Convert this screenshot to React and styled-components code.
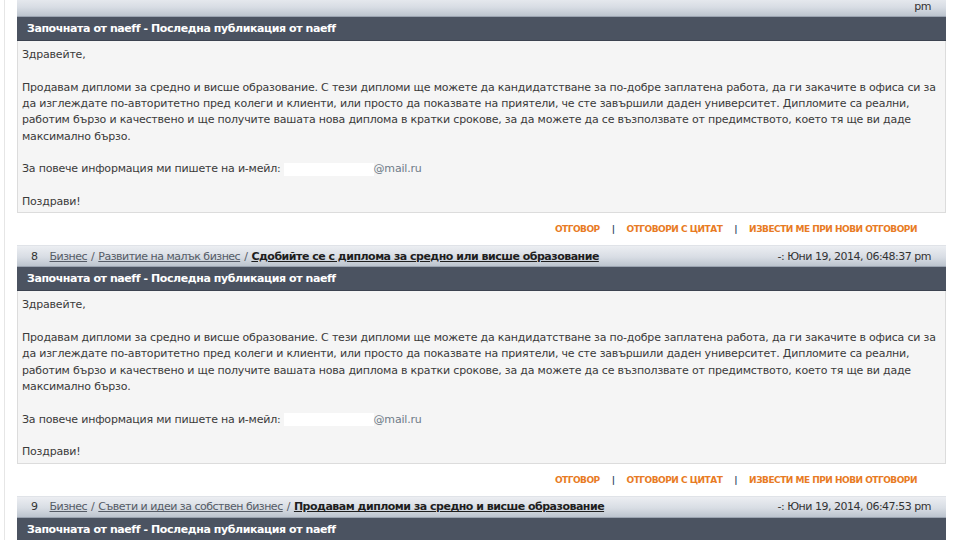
import React from "react";
import styled, { createGlobalStyle } from "styled-components";

const Global = createGlobalStyle`
  html, body { margin: 0; padding: 0; background: #ffffff; overflow: hidden; }
  body { font-family: "DejaVu Sans", Verdana, sans-serif; }
`;

const Page = styled.div`
  width: 956px;
  height: 540px;
  overflow: hidden;
  position: relative;
  background: #ffffff;
  border-left: 1px solid #e6e6e6;
  margin-left: 4px;
  box-sizing: border-box;
`;

const List = styled.div`
  display: flex;
  flex-direction: column;
  margin-top: -5px;
  margin-left: 12px;
  width: 929px;
`;

const Post = styled.div`
  display: flex;
  flex-direction: column;
`;

const TitleBar = styled.div`
  height: 22px;
  box-sizing: border-box;
  display: flex;
  align-items: center;
  justify-content: space-between;
  padding: 0 15px 0 14px;
  background: linear-gradient(#eceef2 0%, #d8dde4 55%, #bcc4ce 100%);
  border-top: 1px solid #e0e3e8;
  border-bottom: 1px solid #9aa3b0;
  font-family: "DejaVu Sans", Verdana, sans-serif;
  font-size: 11px;
  letter-spacing: -0.5px;
  color: #333;
`;

const Crumbs = styled.div`
  display: flex;
  align-items: center;
  white-space: nowrap;
`;

const Num = styled.span`
  margin-right: 12px;
  color: #333;
`;

const Crumb = styled.a`
  color: ${(p) => (p.$strong ? "#1e1e1e" : "#555b66")};
  font-weight: ${(p) => (p.$strong ? "bold" : "normal")};
  text-decoration: underline;
`;

const Slash = styled.span`
  color: #555b66;
  margin: 0 4px;
`;

const DateText = styled.span`
  white-space: nowrap;
  color: #333;
`;

const DarkBar = styled.div`
  height: 24px;
  box-sizing: border-box;
  display: flex;
  align-items: center;
  padding-left: 10px;
  background: #4b5361;
  border-bottom: 1px solid #3c4350;
  color: #ffffff;
  font-family: "DejaVu Sans", Verdana, sans-serif;
  font-weight: bold;
  font-size: 11px;
  letter-spacing: -0.42px;
  white-space: nowrap;
`;

const Body = styled.div`
  background: #f5f5f5;
  border: 1px solid #dcdcdc;
  border-top: none;
  padding: 6px 4px 2px 4px;
  font-family: "DejaVu Sans", Verdana, sans-serif;
  font-size: 11px;
  letter-spacing: -0.2px;
  line-height: 16.33px;
  color: #3a3a3a;
`;

const Para = styled.p`
  margin: 0 0 16.33px 0;
  white-space: nowrap;
  &:last-child { margin-bottom: 0; }
`;

const Redacted = styled.span`
  display: inline-block;
  width: 90px;
  height: 13px;
  background: #ffffff;
  vertical-align: middle;
  margin-left: 3px;
`;

const Mail = styled.span`
  color: #6f7b88;
`;

const Actions = styled.div`
  height: 32px;
  display: flex;
  align-items: center;
  justify-content: flex-end;
  padding-right: 29px;
  font-family: "DejaVu Sans", Verdana, sans-serif;
  font-size: 9px;
  font-weight: bold;
  letter-spacing: -0.5px;
  text-transform: uppercase;
`;

const ActionLink = styled.a`
  color: #e87b24;
  text-decoration: none;
  white-space: nowrap;
`;

const Sep = styled.span`
  color: #2f3f60;
  margin: 0 12px;
  font-weight: bold;
`;

const posts = [
  {
    num: "7",
    crumbs: ["Бизнес", "Развитие на малък бизнес"],
    subject: "Сдобийте се с диплома за средно или висше образование",
    date: "-: Юни 19, 2014, 06:49:12 pm",
  },
  {
    num: "8",
    crumbs: ["Бизнес", "Развитие на малък бизнес"],
    subject: "Сдобийте се с диплома за средно или висше образование",
    date: "-: Юни 19, 2014, 06:48:37 pm",
  },
  {
    num: "9",
    crumbs: ["Бизнес", "Съвети и идеи за собствен бизнес"],
    subject: "Продавам дипломи за средно и висше образование",
    date: "-: Юни 19, 2014, 06:47:53 pm",
  },
];

function PostView({ p, first }) {
  return (
    <Post>
      <TitleBar>
        <Crumbs>
          {!first && (
            <>
              <Num>{p.num}</Num>
              {p.crumbs.map((c) => (
                <React.Fragment key={c}>
                  <Crumb href="#">{c}</Crumb>
                  <Slash>/</Slash>
                </React.Fragment>
              ))}
              <Crumb href="#" $strong>
                {p.subject}
              </Crumb>
            </>
          )}
        </Crumbs>
        <DateText>{first ? "pm" : p.date}</DateText>
      </TitleBar>
      <DarkBar>Започната от naeff - Последна публикация от naeff</DarkBar>
      <Body>
        <Para>Здравейте,</Para>
        <Para>
          Продавам дипломи за средно и висше образование. С тези дипломи ще можете да кандидатстване за по-добре заплатена работа, да ги закачите в офиса си за
          <br />
          да изглеждате по-авторитетно пред колеги и клиенти, или просто да показвате на приятели, че сте завършили даден университет. Дипломите са реални,
          <br />
          работим бързо и качествено и ще получите вашата нова диплома в кратки срокове, за да можете да се възползвате от предимството, което тя ще ви даде
          <br />
          максимално бързо.
        </Para>
        <Para>
          За повече информация ми пишете на и-мейл:
          <Redacted />
          <Mail>@mail.ru</Mail>
        </Para>
        <Para>Поздрави!</Para>
      </Body>
      <Actions>
        <ActionLink href="#">Отговор</ActionLink>
        <Sep>|</Sep>
        <ActionLink href="#">Отговори с цитат</ActionLink>
        <Sep>|</Sep>
        <ActionLink href="#">Извести ме при нови отговори</ActionLink>
      </Actions>
    </Post>
  );
}

export default function App() {
  return (
    <>
      <Global />
      <Page>
        <List>
          {posts.map((p, i) => (
            <PostView key={p.num} p={p} first={i === 0} />
          ))}
        </List>
      </Page>
    </>
  );
}
